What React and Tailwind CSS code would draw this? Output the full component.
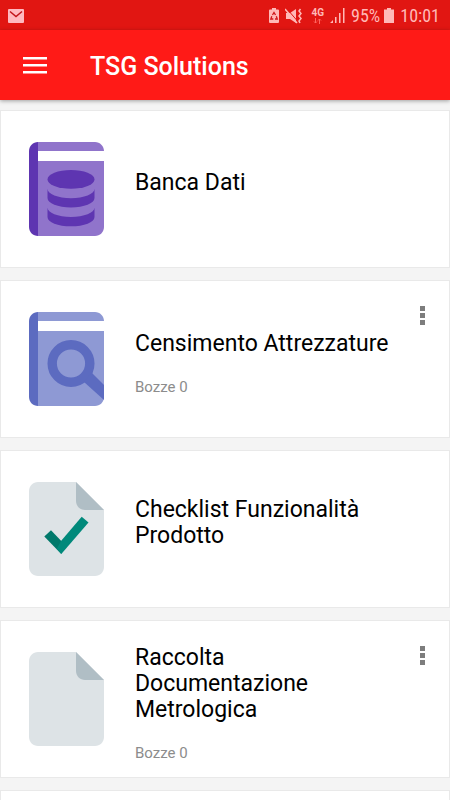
import React from 'react';

const modules = [
  { id: 'banca', title: 'Banca Dati', icon: DatabaseBook },
  { id: 'censimento', title: 'Censimento Attrezzature', icon: SearchBook, drafts: 0 },
  { id: 'checklist', title: 'Checklist Funzionalità Prodotto', icon: CheckedSheet },
  { id: 'raccolta', title: 'Raccolta Documentazione Metrologica', icon: Sheet, drafts: 0 },
];

function Book({ cover, spine, children }) {
  return (
    <svg viewBox="0 0 75 94" className="block w-full" aria-hidden="true">
      <path fill={cover} d="M9 0h57c5 0 9 4 9 9H9zM9 19h66v66c0 5-4 9-9 9H9z" />
      <path fill={spine} d="M9 0v94c-5 0-9-4-9-9V9c0-5 4-9 9-9z" />
      {children}
    </svg>
  );
}

function DatabaseBook() {
  return (
    <Book cover="#9074cb" spine="#5e35b1">
      <g fill="#5e35b1">
        <ellipse cx="42" cy="37.4" rx="23.5" ry="9.4" />
        <path d="M18.5 46.8c0 5.2 10.5 9.4 23.5 9.4s23.5-4.2 23.5-9.4v9.3c0 5.2-10.5 9.4-23.5 9.4s-23.5-4.2-23.5-9.4z" />
        <path d="M18.5 65.6c0 5.2 10.5 9.4 23.5 9.4s23.5-4.2 23.5-9.4v9.3c0 5.2-10.5 9.4-23.5 9.4s-23.5-4.2-23.5-9.4z" />
      </g>
    </Book>
  );
}

function SearchBook() {
  return (
    <Book cover="#8e99d4" spine="#5c6bc0">
      <circle cx="42" cy="51.5" r="18.8" fill="none" stroke="#5c6bc0" strokeWidth="9.4" />
      <path fill="#5c6bc0" d="M62.5 60.5L75 73v15L55 70z" />
    </Book>
  );
}

function Sheet({ children }) {
  return (
    <svg viewBox="0 0 75 94" className="block w-full" aria-hidden="true">
      <path fill="#dde3e6" d="M9 0h38l28 28v57c0 5-4 9-9 9H9c-5 0-9-4-9-9V9c0-5 4-9 9-9z" />
      <path fill="#b0bec5" d="M47 0l28 28H56c-5 0-9-4-9-9z" />
      {children}
    </svg>
  );
}

function CheckedSheet() {
  return (
    <Sheet>
      <path fill="#00796b" d="M15.3 54.5l6.7-6.2 10.3 10.7v13z" />
      <path fill="#00897b" d="M32.3 72l-4.6-5 4.3-8 20.7-24.3 6.8 5.8z" />
    </Sheet>
  );
}

function StatusBar() {
  return (
    <div className="flex h-[30px] items-center justify-between bg-[#e11612] pl-2 pr-[10px] pt-px text-[#ffb9b7]">
      <svg width="16" height="14" viewBox="0 0 16 14" role="img" aria-label="Mail">
        <rect width="16" height="14" rx="1" fill="#ffb9c0" />
        <path d="M2 2.5l6 5 6-5" fill="none" stroke="#c3141a" strokeWidth="1.5" />
      </svg>
      <div className="flex items-center">
        <svg width="10" height="15" viewBox="0 0 10 15" className="mr-1.5" aria-hidden="true">
          <path fill="currentColor" d="M3 0h4v1.5h2a1 1 0 011 1V14a1 1 0 01-1 1H1a1 1 0 01-1-1V2.5a1 1 0 011-1h2z" />
          <path fill="none" stroke="#d0161a" strokeWidth="1.3" d="M3.5 7L5 4.5 6.500 7M7.3 8.2L8.3 11H6M4.3 11H1.8l1-2.8" />
        </svg>
        <svg width="17" height="16" viewBox="0 0 17 16" className="mr-2.5" aria-hidden="true">
          <path fill="currentColor" d="M1 5h4l6-4v14l-6-4H1z" />
          <path fill="none" stroke="#e11612" d="M2.5 1.500l9.500 11" />
          <path fill="none" stroke="currentColor" strokeWidth="1.500" d="M0 1l12 14M15.500 1l-1.500 2 2 2.500-2 2.500 2 2.500-2 2.500 1 2" />
        </svg>
        <div className="mr-1.5 flex flex-col items-center">
          <span className="text-[10px] font-bold leading-[10px]">4G</span>
          <svg width="9" height="6" viewBox="0 0 9 6" aria-hidden="true">
            <path fill="none" stroke="#ff6660" d="M2.500 0v5M1 3.500L2.500 5 4 3.500M6.500 6V1M5 2.500L6.500 1 8 2.500" />
          </svg>
        </div>
        <svg width="15" height="15" viewBox="0 0 15 15" className="mr-1.5" aria-hidden="true">
          <path fill="currentColor" d="M0 15l3-3v3zM5 9h1.500v6H5zM9 5h1.500v10H9zM13 0h1.500v15H13z" />
        </svg>
        <span className="mr-1 font-['Roboto_Condensed','Roboto',sans-serif] text-lg leading-5">95%</span>
        <svg width="10" height="15" viewBox="0 0 10 15" className="mr-1.5" aria-hidden="true">
          <path fill="currentColor" d="M3 0h4v1.500h3V15H0V1.500h3z" />
        </svg>
        <span className="font-['Roboto_Condensed','Roboto',sans-serif] text-lg leading-5">10:01</span>
      </div>
    </div>
  );
}

function ModuleCard({ title, icon: Icon, drafts }) {
  const hasDrafts = drafts !== undefined;

  return (
    <li className="flex min-h-[158px] items-center border border-[#e9e9e9] bg-white pl-7">
      <div className="w-[75px] shrink-0">
        <Icon />
      </div>
      <div className={`ml-[31px] min-w-0 flex-1 ${hasDrafts ? 'pt-2.5' : 'pb-3'}`}>
        <h2 className="text-[23px] leading-[26px] text-black">{title}</h2>
        {hasDrafts && <p className="mt-5 text-[15px] leading-5 text-[#8c8c8c]">Bozze {drafts}</p>}
      </div>
      <div className="flex w-[54px] shrink-0 justify-center self-stretch">
        {hasDrafts && (
          <button type="button" aria-label={`Menu ${title}`} className="mt-4 flex h-9 w-9 items-center justify-center">
            <svg width="5" height="19" viewBox="0 0 5 19" fill="#7d7d7d" aria-hidden="true">
              <path d="M0 0h5v5H0zM0 7h5v5H0zM0 14h5v5H0z" />
            </svg>
          </button>
        )}
      </div>
    </li>
  );
}

export default function App() {
  return (
    <div className="flex h-screen flex-col overflow-hidden bg-[#f4f4f4] font-['Roboto',sans-serif]">
      <StatusBar />
      <header className="z-10 flex h-[70px] shrink-0 items-center bg-[#ff1a17] pl-[23px] shadow-[0_1px_4px_rgba(0,0,0,0.35)]">
        <button type="button" aria-label="Apri menu" className="py-3">
          <svg width="24" height="17" viewBox="0 0 24 17" fill="#fff" aria-hidden="true">
            <path d="M0 0h24v2.500H0zM0 7h24v2.500H0zM0 14h24v2.500H0z" />
          </svg>
        </button>
        <h1 className="ml-[43px] pt-1 text-[25px] font-medium leading-8 text-white">TSG Solutions</h1>
      </header>

      <main className="min-h-0 flex-1 overflow-hidden pt-2.5">
        <ul className="flex flex-col gap-3">
          {modules.map((m) => (
            <ModuleCard key={m.id} {...m} />
          ))}
          <li className="min-h-[158px] border border-[#e9e9e9] bg-white" />
        </ul>
      </main>
    </div>
  );
}
